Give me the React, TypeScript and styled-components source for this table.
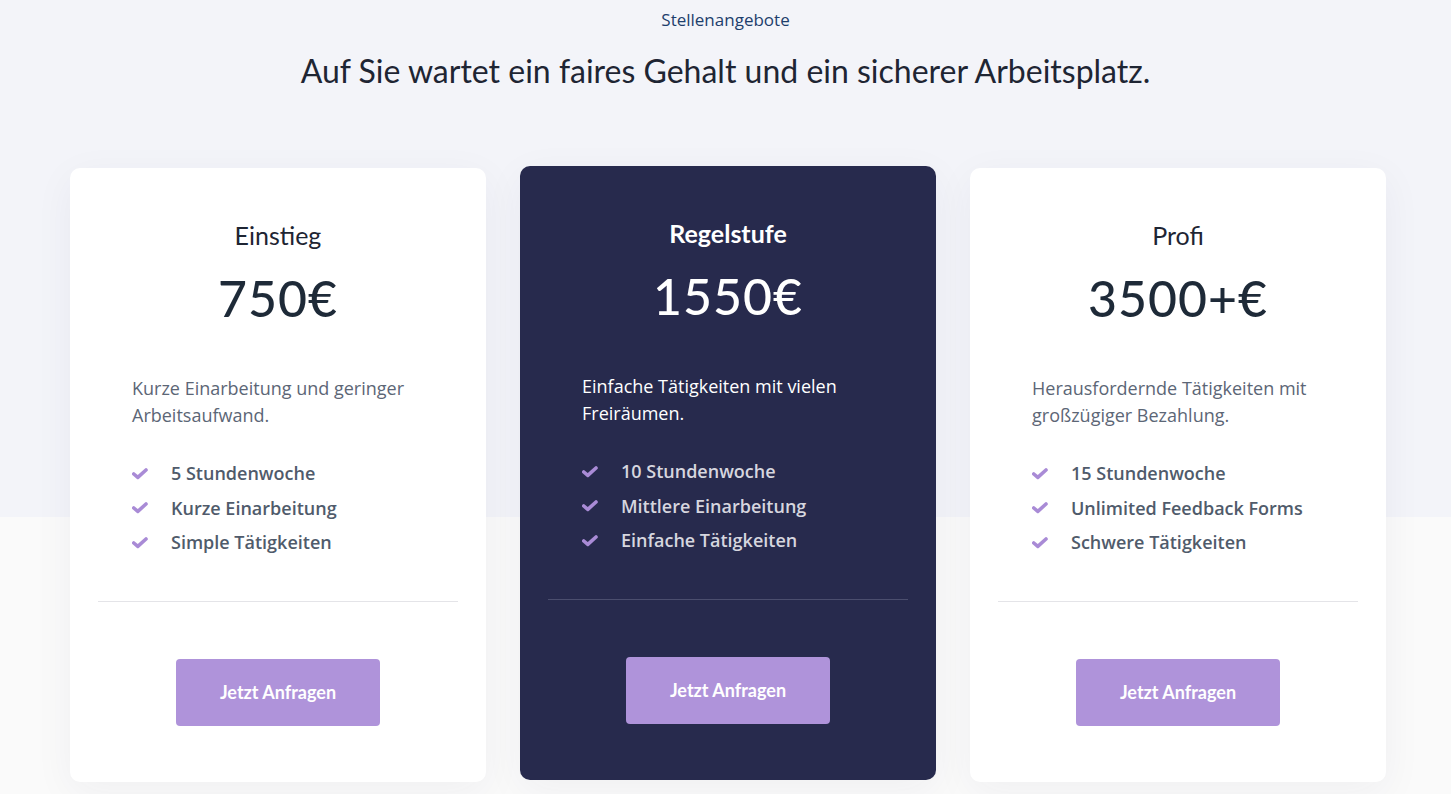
import React from 'react'
import styled, { createGlobalStyle } from 'styled-components'

const GlobalStyle = createGlobalStyle`
  html, body {
    margin: 0;
    padding: 0;
    background: #fafafa;
  }
  * {
    box-sizing: border-box;
  }
`

interface Plan {
  title: string
  price: string
  description: string
  features: string[]
  featured?: boolean
}

const PLANS: Plan[] = [
  {
    title: 'Einstieg',
    price: '750€',
    description: 'Kurze Einarbeitung und geringer Arbeitsaufwand.',
    features: ['5 Stundenwoche', 'Kurze Einarbeitung', 'Simple Tätigkeiten'],
  },
  {
    title: 'Regelstufe',
    price: '1550€',
    description: 'Einfache Tätigkeiten mit vielen Freiräumen.',
    features: ['10 Stundenwoche', 'Mittlere Einarbeitung', 'Einfache Tätigkeiten'],
    featured: true,
  },
  {
    title: 'Profi',
    price: '3500+€',
    description: 'Herausfordernde Tätigkeiten mit großzügiger Bezahlung.',
    features: ['15 Stundenwoche', 'Unlimited Feedback Forms', 'Schwere Tätigkeiten'],
  },
]

const Section = styled.section`
  width: 1451px;
  height: 794px;
  overflow: hidden;
  background: linear-gradient(to bottom, #f3f4f9 0, #f3f4f9 517px, #fafafa 517px);
  display: flex;
  flex-direction: column;
  align-items: center;
`

const Eyebrow = styled.div`
  margin-top: 8px;
  font-family: 'Open Sans', sans-serif;
  font-size: 17px;
  line-height: 24px;
  font-weight: 500;
  color: #1d3e6c;
`

const Heading = styled.h2`
  margin: 19px 0 0;
  font-family: Lato, 'Noto Sans', sans-serif;
  font-weight: 400;
  font-size: 32px;
  line-height: 40px;
  color: #1e2533;
`

const CardRow = styled.div`
  margin-top: 77px;
  display: flex;
  gap: 34px;
  padding-left: 5px;
`

const Card = styled.div<{ $featured?: boolean }>`
  width: 416px;
  height: 614px;
  border-radius: 10px;
  padding: 51px 28px 0;
  display: flex;
  flex-direction: column;
  background: ${({ $featured }) => ($featured ? '#272a4d' : '#ffffff')};
  box-shadow: 0 10px 40px rgba(40, 44, 80, 0.05);
  transform: ${({ $featured }) => ($featured ? 'translateY(-2px)' : 'none')};
`

const PlanTitle = styled.h3<{ $featured?: boolean }>`
  margin: 0;
  text-align: center;
  font-family: Lato, 'Noto Sans', sans-serif;
  font-size: 25px;
  line-height: 32px;
  font-weight: ${({ $featured }) => ($featured ? 700 : 400)};
  color: ${({ $featured }) => ($featured ? '#ffffff' : '#1e2533')};
`

const Price = styled.div<{ $featured?: boolean }>`
  margin-top: 17px;
  text-align: center;
  font-family: Lato, 'Noto Sans', sans-serif;
  font-size: 50px;
  line-height: 60px;
  font-weight: 500;
  letter-spacing: 1px;
  color: ${({ $featured }) => ($featured ? '#ffffff' : '#1e2a38')};
`

const Body = styled.div`
  padding: 0 34px;
`

const Description = styled.p<{ $featured?: boolean }>`
  margin: 47px 0 0;
  font-family: 'Open Sans', sans-serif;
  font-size: 18px;
  line-height: 27px;
  font-weight: ${({ $featured }) => ($featured ? 500 : 400)};
  color: ${({ $featured }) => ($featured ? '#ffffff' : '#5c6676')};
`

const FeatureList = styled.ul`
  list-style: none;
  margin: 27px 0 0;
  padding: 0;
`

const Feature = styled.li<{ $featured?: boolean }>`
  display: flex;
  align-items: center;
  gap: 23px;
  height: 34.5px;
  font-family: 'Open Sans', sans-serif;
  font-size: 18px;
  font-weight: 600;
  color: ${({ $featured }) => ($featured ? '#d6d6df' : '#505b6b')};
`

const Divider = styled.hr<{ $featured?: boolean }>`
  margin: 41px 0 0;
  border: 0;
  height: 1px;
  background: ${({ $featured }) => ($featured ? '#4b4e6e' : '#e4e4e8')};
`

const Button = styled.button`
  align-self: center;
  margin-top: 57px;
  width: 204px;
  height: 67px;
  border: 0;
  border-radius: 4px;
  background: #af93da;
  color: #ffffff;
  font-family: Lato, 'Noto Sans', sans-serif;
  font-size: 18px;
  font-weight: 700;
  cursor: pointer;
`

function Check() {
  return (
    <svg width="16" height="13" viewBox="0 0 16 13" aria-hidden="true">
      <path
        d="M1.8 7 L5.8 10.4 L14 3"
        fill="none"
        stroke="#a98bd6"
        strokeWidth="3.6"
        strokeLinecap="round"
        strokeLinejoin="round"
      />
    </svg>
  )
}

export default function App() {
  return (
    <>
      <GlobalStyle />
      <Section>
        <Eyebrow>Stellenangebote</Eyebrow>
        <Heading>Auf Sie wartet ein faires Gehalt und ein sicherer Arbeitsplatz.</Heading>
        <CardRow>
          {PLANS.map((plan) => (
            <Card key={plan.title} $featured={plan.featured}>
              <PlanTitle $featured={plan.featured}>{plan.title}</PlanTitle>
              <Price $featured={plan.featured}>{plan.price}</Price>
              <Body>
                <Description $featured={plan.featured}>{plan.description}</Description>
                <FeatureList>
                  {plan.features.map((f) => (
                    <Feature key={f} $featured={plan.featured}>
                      <Check />
                      {f}
                    </Feature>
                  ))}
                </FeatureList>
              </Body>
              <Divider $featured={plan.featured} />
              <Button>Jetzt Anfragen</Button>
            </Card>
          ))}
        </CardRow>
      </Section>
    </>
  )
}
